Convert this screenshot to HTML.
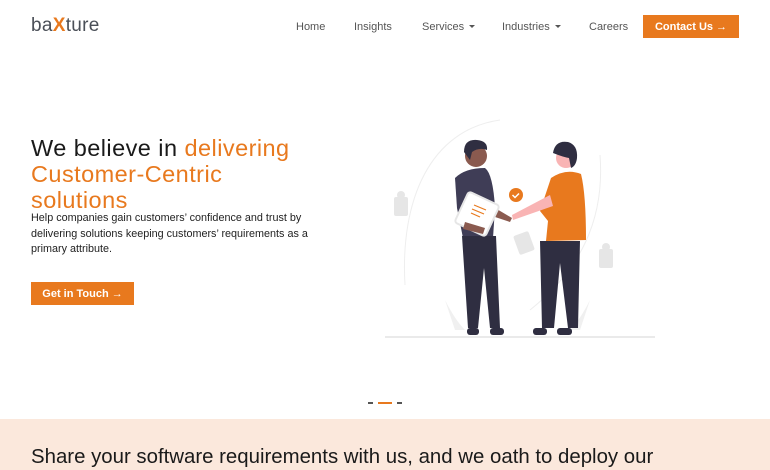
<!DOCTYPE html>
<html><head><meta charset="utf-8"><style>
*{margin:0;padding:0;box-sizing:border-box}
body{width:770px;height:470px;overflow:hidden;background:#fff;font-family:"Liberation Sans",sans-serif;position:relative}
.abs{position:absolute}
.logo{left:31px;top:15px;font-size:19px;color:#4a4f57;letter-spacing:0.3px}
.logo b{color:#e8791e;font-weight:bold}
.nav{top:21px;font-size:11px;color:#555}
.caret{display:inline-block;width:0;height:0;border-left:3px solid transparent;border-right:3px solid transparent;border-top:3px solid #555;margin-left:5px;vertical-align:2px}
.btn{background:#e8791e;color:#fff;font-weight:bold;font-size:11px;display:flex;align-items:center;justify-content:center}
h1{left:31px;top:135px;font-size:23.5px;font-weight:normal;line-height:26px;color:#1a1a1a;letter-spacing:0.45px}
h1 span{color:#e8791e}
.p{left:31px;top:211px;width:290px;font-size:10.8px;line-height:15.5px;color:#222}
.band{left:0;top:419px;width:770px;height:51px;background:#fbe8dc}
.band div{position:absolute;left:31px;top:27px;font-size:20.4px;color:#1a1a1a;white-space:nowrap}
</style></head><body>
<div class="abs logo">ba<b>X</b>ture</div>
<div class="abs nav" style="left:296px">Home</div>
<div class="abs nav" style="left:354px">Insights</div>
<div class="abs nav" style="left:422px">Services<span class="caret"></span></div>
<div class="abs nav" style="left:502px">Industries<span class="caret"></span></div>
<div class="abs nav" style="left:589px">Careers</div>
<div class="abs btn" style="left:643px;top:15px;width:96px;height:23px">Contact Us →</div>

<h1 class="abs">We believe in <span>delivering<br>Customer-Centric<br>solutions</span></h1>
<div class="abs p">Help companies gain customers’ confidence and trust by delivering solutions keeping customers’ requirements as a primary attribute.</div>
<div class="abs btn" style="left:31px;top:282px;width:103px;height:23px">Get in Touch →</div>

<svg class="abs" style="left:0;top:0" width="770" height="420">
<g fill="none" stroke="#eee" stroke-width="1">
<path d="M405 285 C400 200 430 130 500 120"/>
<path d="M600 155 C605 220 580 270 530 310"/>
</g>
<path d="M445 300 q10 20 20 30 l-10 0 z" fill="#f0f0f0"/>
<path d="M590 300 q-10 20 -20 30 l10 0 z" fill="#f0f0f0"/>
<g fill="#e6e6e6"><rect x="394" y="197" width="14" height="19" rx="2"/><circle cx="401" cy="195" r="4"/>
<rect x="599" y="249" width="14" height="19" rx="2"/><circle cx="606" cy="247" r="4"/>
<rect x="516" y="233" width="16" height="20" rx="2" transform="rotate(-20 524 243)"/></g>
<line x1="385" y1="337" x2="655" y2="337" stroke="#e3e3e3" stroke-width="1.5"/>
<circle cx="476" cy="156" r="11" fill="#8a5a4f"/>
<path d="M464 152 q0-13 13-12 q11 1 10 10 q-8-3-15 2 l-2 8 z" fill="#2f2e41"/>
<path d="M455 178 q10-10 30-10 q8 6 10 40 l-2 30 l-30 0 l-6-30 z" fill="#3f3d56"/>
<path d="M462 236 l34 0 l4 92 l-10 0 l-6-60 l-6 60 l-10 0 z" fill="#2f2e41"/>
<rect x="467" y="328" width="12" height="7" rx="3" fill="#2f2e41"/><rect x="490" y="328" width="14" height="7" rx="3" fill="#2f2e41"/>
<path d="M490 205 l22 13 l-2 4 l-24-8 z" fill="#8a5a4f"/>
<rect x="460" y="197" width="34" height="34" rx="3" fill="#fff" stroke="#e6e6e6" stroke-width="2" transform="rotate(25 477 214)"/>
<g stroke="#e8791e" stroke-width="1.2"><line x1="474" y1="205" x2="486" y2="210"/><line x1="472" y1="209" x2="484" y2="214"/><line x1="471" y1="213" x2="480" y2="217"/></g>
<path d="M465 222 l20 6 l-2 6 l-20-5 z" fill="#8a5a4f"/>
<circle cx="566" cy="158" r="10" fill="#f9b4b4"/>
<path d="M553 153 q2-13 15-11 q10 3 9 16 q-1 8-6 10 l-2-10 q-6-1-16-5 z" fill="#2f2e41"/>
<path d="M551 178 q15-10 30-4 q5 20 5 66 l-40 1 l2-20 l-8-10 z" fill="#e8791e"/>
<path d="M540 241 l40 0 l-2 87 l-10 0 l-8-65 l-6 65 l-12 0 z" fill="#2f2e41"/>
<rect x="533" y="328" width="14" height="7" rx="3" fill="#2f2e41"/><rect x="557" y="328" width="15" height="7" rx="3" fill="#2f2e41"/>
<path d="M550 195 l-38 20 l1 5 l40-14 z" fill="#f9b4b4"/>
<circle cx="516" cy="195" r="7" fill="#e8791e"/>
<path d="M512.5 195 l2.5 2.5 l4-4" stroke="#fff" stroke-width="1.5" fill="none"/>
<rect x="368" y="402" width="5" height="2" fill="#555"/>
<rect x="378" y="402" width="14" height="2" fill="#e8791e"/>
<rect x="397" y="402" width="5" height="2" fill="#555"/>
</svg>

<div class="abs band"><div>Share your software requirements with us, and we oath to deploy our</div></div>
</body></html>
